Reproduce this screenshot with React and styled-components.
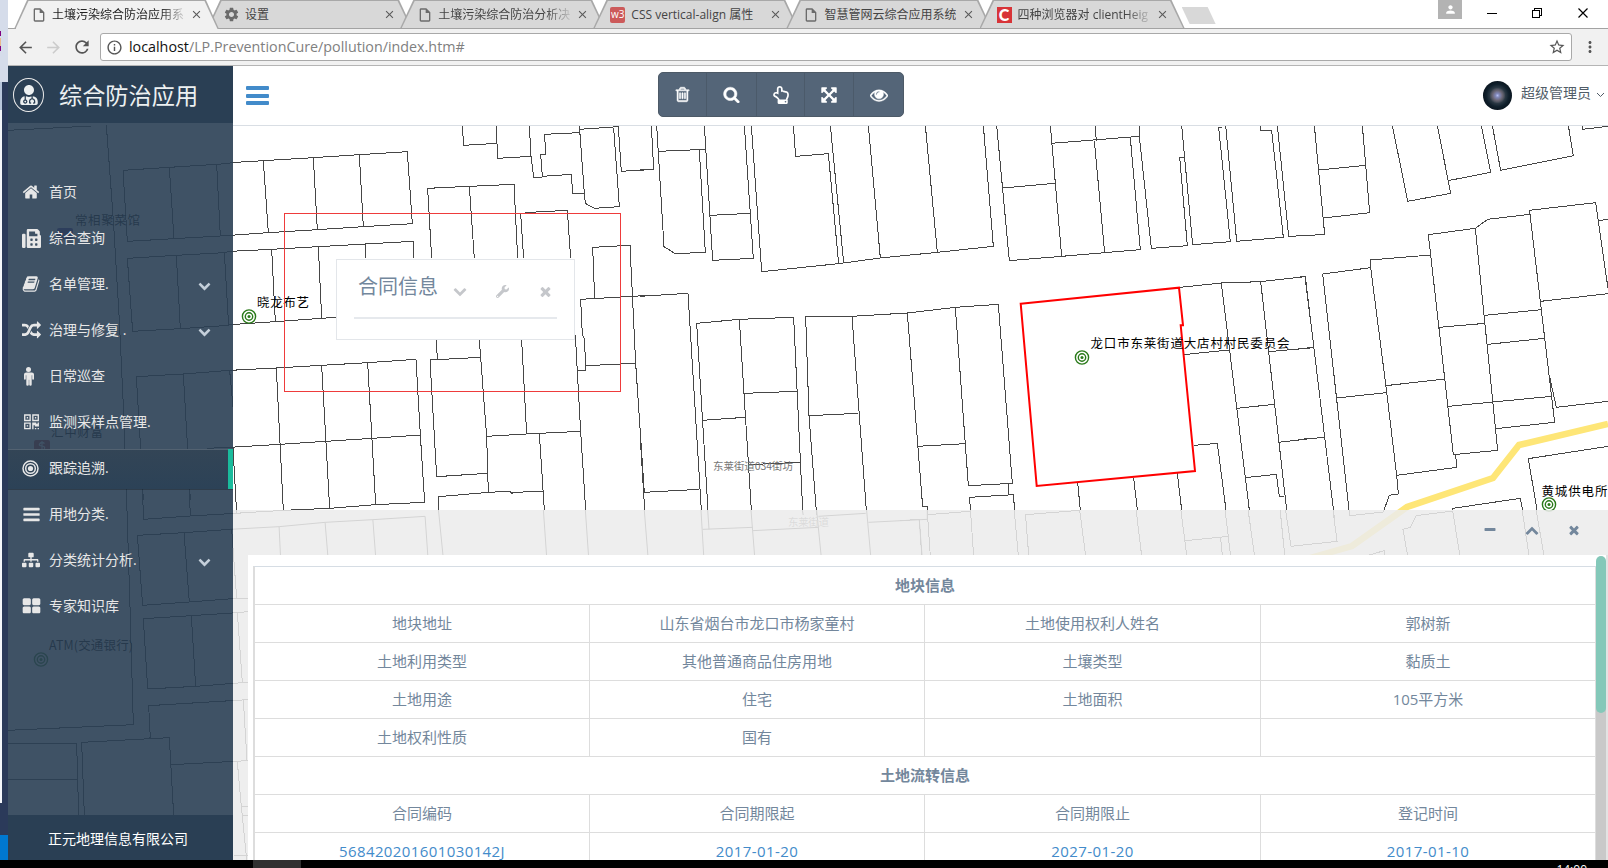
import React from "react";
import styled, { createGlobalStyle, css } from "styled-components";
import {
  MdArrowBack,
  MdArrowForward,
  MdRefresh,
  MdInfoOutline,
  MdStarBorder,
  MdMoreVert,
  MdSettings,
  MdPerson,
  MdClose,
  MdOutlineInsertDriveFile,
} from "react-icons/md";
import { FaFax, FaSitemap, FaWrench, FaUserMd, FaRegHandPointUp } from "react-icons/fa";

const Global = createGlobalStyle`
  * { box-sizing: border-box; }
  html, body { margin: 0; padding: 0; background: #000; overflow: hidden; }
  body { font-family: "Open Sans", "Noto Sans CJK SC", sans-serif; }
  svg { display: block; flex: none; }
`;

/* ---------- icons ---------- */

const PATHS = {
  home: "M1472 992v480q0 26-19 45t-45 19h-384v-384h-256v384h-384q-26 0-45-19t-19-45v-480q0-1 .5-3t.5-3l575-474 575 474q1 2 1 6zm223-69l-62 74q-8 9-21 11h-3q-13 0-21-7l-692-577-692 577q-12 8-24 7-13-2-21-11l-62-74q-8-10-7-23.5t11-21.5l719-599q32-26 76-26t76 26l244 204v-195q0-14 9-23t23-9h192q14 0 23 9t9 23v408l219 182q10 8 11 21.5t-7 23.5z",
  book: "M1703 478q40 57 18 129l-275 906q-19 64-76.5 107.5t-122.5 43.5h-923q-77 0-148.5-53.5t-99.5-131.5q-24-67-2-127 0-4 3-27t4-37q1-8-3-21.5t-3-19.5q2-11 8-21t16.5-23.5 16.5-23.5q23-38 45-91.5t30-91.5q3-10 .5-30t-.5-28q3-11 17-28t17-23q21-36 42-92t25-90q1-9-2.5-32t.5-28q4-13 22-30.5t22-22.5q19-26 42.5-84.5t27.5-96.5q1-8-3-25.5t-2-26.5q2-8 9-18t18-23 17-21q8-12 16.5-30.5t15-35 16-36 19.5-32 26.5-23.5 36-11.5 47.5 5.5l-1 3q38-9 51-9h761q74 0 114 56t18 130l-274 906q-36 119-71.5 153.5t-128.5 34.5h-869q-27 0-38 15-11 16-1 43 24 70 144 70h923q29 0 56-15.5t35-41.5l300-987q7-22 5-57 38 15 59 43zm-1064 2q-4 13 2 22.5t20 9.5h608q13 0 25.5-9.5t16.5-22.5l21-64q4-13-2-22.5t-20-9.5h-608q-13 0-25.5 9.5t-16.5 22.5zm-83 256q-4 13 2 22.5t20 9.5h608q13 0 25.5-9.5t16.5-22.5l21-64q4-13-2-22.5t-20-9.5h-608q-13 0-25.5 9.5t-16.5 22.5z",
  random: "M666 481q-60 92-137 273-22-45-37-72.5t-40.5-63.5-51-56.5-63-35-81.5-14.5h-224q-14 0-23-9t-9-23v-192q0-14 9-23t23-9h224q250 0 410 225zm1126 799q0 14-9 23l-320 320q-9 9-23 9-13 0-22.5-9.5t-9.5-22.5v-192q-32 0-85 .5t-81 1-73-1-71-5-64-10.5-63-18.5-58-28.5-59-40-55-53.5-56-69.5q59-93 136-273 22 45 37 72.5t40.5 63.5 51 56.5 63 35 81.5 14.5h256v-192q0-14 9-23t23-9q12 0 24 10l319 319q9 9 9 23zm0-896q0 14-9 23l-320 320q-9 9-23 9-13 0-22.5-9.5t-9.5-22.5v-192h-256q-48 0-87 15t-69 45-51 61.5-45 77.5q-32 62-78 171-29 66-49.5 111t-54 105-64 100-74 83-90 68.5-106.5 42-128 16.5h-224q-14 0-23-9t-9-23v-192q0-14 9-23t23-9h224q48 0 87-15t69-45 51-61.5 45-77.5q32-62 78-171 29-66 49.5-111t54-105 64-100 74-83 90-68.5 106.5-42 128-16.5h256v-192q0-14 9-23t23-9q12 0 24 10l319 319q9 9 9 23z",
  qrcode: "M576 1152v128h-128v-128h128zm0-768v128h-128v-128h128zm768 0v128h-128v-128h128zm-1024 1023h384v-383h-384v383zm0-767h384v-384h-384v384zm768 0h384v-384h-384v384zm-256 256v640h-640v-640h640zm512 512v128h-128v-128h128zm256 0v128h-128v-128h128zm0-512v384h-384v-128h-128v384h-128v-640h384v128h128v-128h128zm-768-768v640h-640v-640h640zm768 0v640h-640v-640h640z",
  bars: "M1664 1344v128q0 26-19 45t-45 19h-1408q-26 0-45-19t-19-45v-128q0-26 19-45t45-19h1408q26 0 45 19t19 45zm0-512v128q0 26-19 45t-45 19h-1408q-26 0-45-19t-19-45v-128q0-26 19-45t45-19h1408q26 0 45 19t19 45zm0-512v128q0 26-19 45t-45 19h-1408q-26 0-45-19t-19-45v-128q0-26 19-45t45-19h1408q26 0 45 19t19 45z",
  blocks: "M832 1024v384q0 52-38 90t-90 38h-512q-52 0-90-38t-38-90v-384q0-52 38-90t90-38h512q52 0 90 38t38 90zm0-768v384q0 52-38 90t-90 38h-512q-52 0-90-38t-38-90v-384q0-52 38-90t90-38h512q52 0 90 38t38 90zm896 768v384q0 52-38 90t-90 38h-512q-52 0-90-38t-38-90v-384q0-52 38-90t90-38h512q52 0 90 38t38 90zm0-768v384q0 52-38 90t-90 38h-512q-52 0-90-38t-38-90v-384q0-52 38-90t90-38h512q52 0 90 38t38 90z",
  search: "M1216 832q0-185-131.5-316.5t-316.5-131.5-316.5 131.5-131.5 316.5 131.5 316.5 316.5 131.5 316.5-131.5 131.5-316.5zm512 832q0 52-38 90t-90 38q-54 0-90-38l-343-342q-179 124-399 124-143 0-273.5-55.5t-225-150-150-225-55.5-273.5 55.5-273.5 150-225 225-150 273.5-55.5 273.5 55.5 225 150 150 225 55.5 273.5q0 220-124 399l343 343q37 37 37 90z",
  close: "M1490 1322q0 40-28 68l-136 136q-28 28-68 28t-68-28l-294-294-294 294q-28 28-68 28t-68-28l-136-136q-28-28-28-68t28-68l294-294-294-294q-28-28-28-68t28-68l136-136q28-28 68-28t68 28l294 294 294-294q28-28 68-28t68 28l136 136q28 28 28 68t-28 68l-294 294 294 294q28 28 28 68z",
  down: "M1683 808l-742 741q-19 19-45 19t-45-19l-742-741q-19-19-19-45.5t19-45.5l166-165q19-19 45-19t45 19l531 531 531-531q19-19 45-19t45 19l166 165q19 19 19 45.5t-19 45.5z",
  up: "M1683 1331l-166 165q-19 19-45 19t-45-19l-531-531-531 531q-19 19-45 19t-45-19l-166-165q-19-19-19-45.5t19-45.5l742-741q19-19 45-19t45 19l742 741q19 19 19 45.5t-19 45.5z",
  minus: "M1600 736v192q0 40-28 68t-68 28h-1216q-40 0-68-28t-28-68v-192q0-40 28-68t68-28h1216q40 0 68 28t28 68z",
  eye: "M1664 960q-152-236-381-353 61 104 61 225 0 185-131.5 316.5t-316.5 131.5-316.5-131.5-131.5-316.5q0-121 61-225-229 117-381 353 133 205 333.5 326.5t434.5 121.5 434.5-121.5 333.5-326.5zm-720-384q0-20-14-34t-34-14q-125 0-214.5 89.5t-89.5 214.5q0 20 14 34t34 14 34-14 14-34q0-86 61-147t147-61q20 0 34-14t14-34zm848 384q0 34-20 69-140 230-376.5 368.5t-499.5 138.5-499.5-139-376.5-368q-20-35-20-69t20-69q140-229 376.5-368t499.5-139 499.5 139 376.5 368q20 35 20 69z",
  trash: "M704 736v576q0 14-9 23t-23 9h-64q-14 0-23-9t-9-23v-576q0-14 9-23t23-9h64q14 0 23 9t9 23zm256 0v576q0 14-9 23t-23 9h-64q-14 0-23-9t-9-23v-576q0-14 9-23t23-9h64q14 0 23 9t9 23zm256 0v576q0 14-9 23t-23 9h-64q-14 0-23-9t-9-23v-576q0-14 9-23t23-9h64q14 0 23 9t9 23zm128 724v-948h-896v948q0 22 7 40.5t14.5 27 10.5 8.5h832q3 0 10.5-8.5t14.5-27 7-40.5zm-672-1076h448l-48-117q-7-9-17-11h-317q-10 2-17 11zm928 32v64q0 14-9 23t-23 9h-96v948q0 83-47 143.5t-113 60.5h-832q-66 0-113-58.5t-47-141.5v-952h-96q-14 0-23-9t-9-23v-64q0-14 9-23t23-9h309l70-167q15-37 54-63t79-26h320q40 0 79 26t54 63l70 167h309q14 0 23 9t9 23z",
  arrows: "M1411 541l-355 355 355 355 144-144q29-31 70-14 39 17 39 59v448q0 26-19 45t-45 19h-448q-42 0-59-40-17-39 14-69l144-144-355-355-355 355 144 144q31 30 14 69-17 40-59 40h-448q-26 0-45-19t-19-45v-448q0-42 40-59 39-17 69 14l144 144 355-355-355-355-144 144q-19 19-45 19-12 0-24-5-40-17-40-59v-448q0-26 19-45t45-19h448q42 0 59 40 17 39-14 69l-144 144 355 355 355-355-144-144q-31-30-14-69 17-40 59-40h448q26 0 45 19t19 45v448q0 42-39 59-13 5-25 5-26 0-45-19z",
};

const Glyph = ({ name, size = 18, bold = 0 }) => (
  <svg
    width={size}
    height={size}
    viewBox="0 0 1792 1792"
    fill="currentColor"
    stroke={bold ? "currentColor" : "none"}
    strokeWidth={bold}
  >
    <path d={PATHS[name]} />
  </svg>
);

const Bullseye = () => (
  <svg width="17" height="17" viewBox="0 0 17 17" fill="none" stroke="currentColor" strokeWidth="1.5">
    <circle cx="8.5" cy="8.5" r="7.5" />
    <circle cx="8.5" cy="8.5" r="4.8" />
    <circle cx="8.5" cy="8.5" r="2.6" fill="currentColor" stroke="none" />
  </svg>
);

const Person = () => (
  <svg width="13" height="19" viewBox="0 0 13 19" fill="currentColor">
    <circle cx="6.5" cy="2.6" r="2.5" />
    <path d="M3.2 5.4h6.6q2.2 0 2.2 2.2v4.2q0 1-.9 1t-.9-1V8.3h-.5v9.3q0 1.2-1.2 1.2t-1.3-1.2v-4.9h-.4v4.9q0 1.2-1.3 1.2t-1.2-1.2V8.3h-.5v3.5q0 1-.9 1t-.9-1V7.6q0-2.2 2.2-2.2z" />
  </svg>
);

/* ---------- desktop and browser frame ---------- */

const Desktop = styled.div`
  width: 1608px;
  height: 868px;
  display: flex;
  flex-direction: column;
  overflow: hidden;
`;

const DesktopRow = styled.div`
  flex: 0 0 860px;
  display: flex;
`;

const EdgeStrip = styled.div`
  width: 8px;
  display: flex;
  flex-direction: column;
`;

const EdgePiece = styled.div`
  height: ${(p) => p.$h}px;
  background: ${(p) => p.$bg};
`;

const Browser = styled.div`
  flex: 1;
  min-width: 0;
  display: flex;
  flex-direction: column;
  background: #fff;
`;

const TabStrip = styled.div`
  height: 29px;
  display: flex;
  background: linear-gradient(#fff 28px, #a3a3a3 28px);
  padding-left: 6px;
`;

const Tab = styled.div`
  position: relative;
  z-index: ${(p) => (p.$active ? 2 : 0)};
  width: 205px;
  height: ${(p) => (p.$active ? 29 : 28)}px;
  margin-right: -11.9px;
  padding: ${(p) => (p.$active ? 0 : 1)}px 17px 0 17px;
  display: flex;
  align-items: center;
  gap: 6px;
  font-size: 12px;
  color: ${(p) => (p.$active ? "#222" : "#444")};
  isolation: isolate;
  &::before,
  &::after {
    content: "";
    position: absolute;
    inset: 0;
    z-index: -1;
    background: #a8a8a8;
    clip-path: polygon(0 100%, 13px 0, calc(100% - 13px) 0, 100% 100%);
  }
  &::after {
    inset: 1px 1.5px 0;
    background: ${(p) => (p.$active ? "#f1f1f1" : "#d8d8d8")};
  }
`;

const TabIcon = styled.span`
  width: 15px;
  display: flex;
  justify-content: center;
  color: #6b6b6b;
`;

const TabTitle = styled.span`
  flex: 1;
  overflow: hidden;
  white-space: nowrap;
  line-height: 28px;
  ${(p) => p.$fade && css`mask-image: linear-gradient(90deg, #000 108px, transparent 136px);`}
`;

const TabClose = styled.span`
  width: 12px;
  color: #5a5a5a;
`;

const W3Badge = styled.span`
  width: 16px;
  height: 16px;
  border-radius: 2px;
  background: #cc5a5a;
  color: #fff;
  font: 10px/15px "Open Sans", sans-serif;
  text-align: center;
`;

const CBadge = styled(W3Badge)`
  background: #d83438;
  border-radius: 0;
  font: 900 16px/16px "Lato", sans-serif;
`;

const NewTab = styled.div`
  width: 34px;
  height: 17px;
  margin: 7px 0 0 9px;
  background: #d8d8d8;
  clip-path: polygon(0 0, 26px 0, 34px 100%, 8px 100%);
`;

const WindowControls = styled.div`
  margin-left: auto;
  display: flex;
  align-items: flex-start;
`;

const UserBox = styled.div`
  width: 24px;
  height: 19px;
  margin-right: 25px;
  display: flex;
  justify-content: center;
  align-items: center;
  background: #b3b3b3;
  color: #fff;
`;

const AddressBar = styled.div`
  height: 37px;
  display: flex;
  align-items: center;
  padding: 0 9px 0 8px;
  background: #f1f1f1;
  border-bottom: 1px solid #b5b5b5;
`;

const NavButton = styled.span`
  width: 28px;
  display: flex;
  color: ${(p) => (p.$off ? "#ccc" : "#555")};
`;

const Omnibox = styled.div`
  flex: 1;
  height: 28px;
  margin-right: 9px;
  border: 1px solid #a9a9a9;
  border-radius: 3px;
  background: #fff;
  display: flex;
  align-items: center;
  padding: 0 5px;
  color: #555;
`;

const Url = styled.span`
  flex: 1;
  margin-left: 6px;
  font-size: 14.3px;
  line-height: 24px;
  color: #808080;
  b {
    font-weight: 400;
    color: #111;
  }
`;

const Taskbar = styled.div`
  height: 8px;
  background: #000;
  display: flex;
  justify-content: space-between;
  overflow: hidden;
  padding: 0 21px 0 253px;
`;

const TaskItem = styled.div`
  width: 48px;
  background: #303030;
`;

const Clock = styled.div`
  color: #fff;
  font-size: 12px;
  line-height: 16px;
  padding-top: 2px;
`;

/* ---------- application ---------- */

const Stage = styled.div`
  position: relative;
  flex: 1;
  min-height: 0;
  display: flex;
  overflow: hidden;
`;

const MapLayer = styled.svg`
  position: absolute;
  left: 0;
  top: 0;
`;

const Sidebar = styled.aside`
  position: relative;
  width: 225px;
  display: flex;
  flex-direction: column;
  background: rgba(42, 63, 84, 0.9);
  color: #e7e7e7;
`;

const Brand = styled.div`
  height: 57px;
  display: flex;
  align-items: center;
  padding-left: 5px;
  gap: 15px;
  background: #2a3f54;
  color: #ecf0f1;
  font-size: 23.2px;
  line-height: 40px;
`;

const BrandMark = styled.span`
  width: 31px;
  height: 34px;
  border: 1px solid #eaeaea;
  border-radius: 50%;
  display: flex;
  align-items: center;
  justify-content: center;
`;

const Menu = styled.nav`
  flex: 1;
  padding-top: 50px;
  display: flex;
  flex-direction: column;
  gap: 6px;
`;

const MenuItem = styled.div`
  height: 40px;
  padding: 0 ${(p) => (p.$active ? 16 : 22)}px 2px 14px;
  display: flex;
  align-items: center;
  font-size: 14px;
  line-height: 20px;
  ${(p) =>
    p.$active &&
    css`
      background: linear-gradient(#334556, #2c4257);
      box-shadow: inset 0 1px 0 rgba(255, 255, 255, 0.16), 0 1px 0 rgba(0, 0, 0, 0.25);
      border-right: 5px solid #1abb9c;
    `}
`;

const MenuIcon = styled.span`
  width: 27px;
  display: flex;
`;

const MenuLabel = styled.span`
  flex: 1;
`;

const MenuArrow = styled.span`
  color: #c4cfda;
  padding-top: 3px;
`;

const Company = styled.div`
  height: 45px;
  background: #2a3f54;
  color: #fff;
  font-size: 14px;
  line-height: 47px;
  padding-left: 40px;
`;

const Main = styled.main`
  position: relative;
  flex: 1;
  min-width: 0;
  display: flex;
  flex-direction: column;
  justify-content: space-between;
`;

const TopBar = styled.header`
  height: 60px;
  background: #fff;
  border-bottom: 1px solid #d9dee4;
  display: flex;
  align-items: flex-start;
`;

const MenuToggle = styled.div`
  width: 23px;
  margin: 20px 0 0 12.5px;
  display: flex;
  flex-direction: column;
  gap: 3.5px;
  i {
    height: 4px;
    border-radius: 1px;
    background: #428bca;
  }
`;

const ToolGroup = styled.div`
  margin: 6px auto 0 389.5px;
  height: 45px;
  display: flex;
  border: 1px solid #4d5a67;
  border-radius: 5px;
  background: #546578;
  color: #fff;
`;

const ToolButton = styled.span`
  width: ${(p) => p.$w}px;
  display: flex;
  align-items: center;
  justify-content: center;
  & + & {
    border-left: 1px solid #4b5a6a;
  }
`;

const Account = styled.div`
  display: flex;
  align-items: center;
  padding-right: 3px;
  height: 58px;
  font-size: 14px;
  color: #515d68;
`;

const Avatar = styled.div`
  width: 29px;
  height: 29px;
  margin-right: 9px;
  border-radius: 50%;
  background: radial-gradient(circle at 50% 50%, #b4bdf0 0, #8087b8 2px, rgba(120, 110, 125, 0.7) 5px, rgba(90, 80, 80, 0) 8px),
    radial-gradient(circle, #4a5560 20%, #10202c 55%, #050c14 85%);
`;

const AccountName = styled.span`
  margin-right: 5px;
  line-height: 20px;
  padding-bottom: 4px;
`;

const ContractWindow = styled.section`
  position: absolute;
  left: 103px;
  top: 193px;
  width: 239px;
  height: 81px;
  padding: 15px 17px;
  border: 1px solid #e3e6ea;
  background: #fff;
`;

const ContractHeader = styled.div`
  display: flex;
  align-items: center;
  height: 44px;
  padding: 0 3px 18px 4px;
  border-bottom: 2px solid #e6e9ed;
  color: #c5c7cb;
`;

const ContractTitle = styled.h2`
  margin: 0 14px 0 0;
  font-size: 20px;
  font-weight: 400;
  line-height: 26px;
  color: #73879c;
`;

const ContractTool = styled.span`
  width: 15px;
  margin-right: ${(p) => p.$gap || 0}px;
  padding-top: 8px;
  display: flex;
  justify-content: center;
`;

const DetailPanel = styled.section`
  height: 350px;
  display: flex;
  flex-direction: column;
  background: rgba(235, 235, 235, 0.86);
`;

const PanelTools = styled.div`
  height: 45px;
  display: flex;
  justify-content: flex-end;
  gap: 28px;
  padding: 13px 27px 0 0;
  color: #73879c;
`;

const PanelBody = styled.div`
  flex: 1;
  min-height: 0;
  margin-left: 15px;
  display: flex;
  overflow: hidden;
  background: #fff;
`;

const TableArea = styled.div`
  flex: 1;
  padding: 11px 0 0 5px;
`;

const Grid = styled.div`
  display: grid;
  grid-template-columns: 335px 335px 336px 1fr;
  grid-auto-rows: 38px;
  border-top: 1px solid #d6dde4;
  border-left: 2px solid #ddd;
`;

const Cell = styled.div`
  border-right: 1px solid #ddd;
  border-bottom: 1px solid #ddd;
  font-size: 15px;
  line-height: 36px;
  text-align: center;
  color: ${(p) => (p.$link ? "#428bca" : "#73879c")};
  letter-spacing: ${(p) => (p.$link ? "0.4px" : "0")};
  ${(p) =>
    p.$head &&
    css`
      grid-column: 1 / -1;
      font-weight: 700;
    `}
`;

const ScrollTrack = styled.div`
  width: 12px;
  padding: 1px 2px 0 0;
  background: linear-gradient(#fff 14px, #c9c9c9 14px);
  border-right: 2px solid #e3e3e3;
`;

const ScrollThumb = styled.div`
  width: 10px;
  height: 157px;
  border-radius: 5px;
  background: #84c8b9;
`;

/* ---------- map ---------- */

const PARCELS = [
  {
    t: "translate(230 120) scale(.33333)",
    d: "M0 128L100 122L250 113L388 104L532 95L547 311L400 320L262 329L115 338L0 346M100 122L115 338M250 113L262 329M388 104L400 320M697 16L701 76L801 70L798 16M801 70L803 115L903 109L898 16M903 109L911 172H937M1048 38L944 43L947 105H932L937 169L1024 163L1028 220H1063L1048 16M1063 220L1066 250L1093 265L1168 260L1151 24M1048 28L1165 20L1174 154L1260 148M605 415L593 205L718 199L852 193L863 415M718 199L733 415M881 415L872 281L900 277L1012 271L1022 415M0 394L125 388L265 380L407 372L550 364V415M125 388L136 605M265 380L275 595M407 372V415M0 614L136 605L275 595L318 592M1094 535L1088 382L1200 376L1217 730M1052 538L1208 529L1260 526M1052 538L1057 645L1063 655L1067 737V751H1043M1067 737L1217 730L1243 1118H1260M1036 645L1052 935L1067 1170M619 660L622 718M748 660L770 950L775 1117M600 720L751 712M600 720L620 1070L770 1060M875 660L890 942M768 949L890 942L928 940L1052 934M928 940L943 1170M626 1170V1130L775 1117L840 1114L846 1120L850 1117L940 1114M0 751L139 744L275 736L413 728L558 718L571 945L584 1147L437 1154L299 1165L160 1171L0 1181M139 744L160 1171M275 736L299 1165M413 728L437 1154M0 982L150 973L287 964L427 955L571 945M9 984L20 1180",
  },
  {
    t: "translate(640 120) scale(.33333)",
    d: "M34 16L41 148L0 151M50 16L72 380L106 401L196 397L178 90M55 94L196 88M193 16L218 421L340 415L313 16M210 286L331 280M334 16L365 455L595 431L721 414L892 397L1060 379L1030 16M460 16L467 109L565 101L596 431M571 16L611 428M685 16L721 414M856 16L892 397M1070 16L1108 422M0 529L144 520L184 1170M0 940L14 1170M11 1117L178 1108M204 1170L170 610L298 598L461 592L488 1170M298 598L334 1170M312 820L471 814M188 901L315 892M325 1034L481 1027M530 1186L507 887L497 589H636L802 579L946 562L1075 553L1117 1090H1105V1125M507 887L655 880M636 589L679 1170M802 579L848 1160H862V1170M946 562L985 1097L1117 1090M833 979L975 971M991 1170L989 1132L1120 1124L1124 1170",
  },
  {
    t: "translate(1000 120) scale(.33333)",
    d: "M151 16L185 409M154 70L418 49V16M285 16L289 62M283 62L314 398M8 204L164 190M28 422L185 409L314 398L421 389L391 54M418 49L454 385L562 377L539 112H553M545 16L578 374L691 365L656 22H665M677 16L710 364L850 352L815 31H782V16M832 16L866 349L930 346M540 502L664 489L782 485L915 470L930 590M664 489L748 1170M782 485L860 1170M550 704L686 690M806 695L930 684M710 865L823 853M836 967L930 956M735 1073L829 1063L838 1130H853M583 976L652 970L678 1170M233 1088L241 1170M401 1073L412 1170M532 1060L545 1170",
  },
  {
    t: "translate(1300 120) scale(.33333)",
    d: "M43 16L74 343L0 348M57 150L197 136M187 16L209 278L72 294M277 16L323 244L452 220L412 16M444 182L572 157L544 16M577 16L602 151L820 107L805 16M848 16V28L924 19M0 471L16 470L104 1200M0 686L40 682M0 958L75 952M212 443L68 462L149 1187L250 1176L268 1126L295 1122L290 1066L470 1042L467 1003M392 405L211 420L212 443L258 800L290 1066M110 834L258 818M257 797L436 777M385 344L526 325L563 298L690 283L688 271L887 248L924 505M385 344L392 405L460 1004L593 991L526 325M417 622L556 610M445 859L755 829M555 586L724 569M564 673L734 655M690 283L764 907L587 926M722 544L924 521M896 302L924 298M750 775L769 862L924 844M711 1170L685 1016L924 979M459 1170V1165L661 1135L668 1170",
  },
  {
    t: "translate(230 500) scale(.44643 .33333)",
    d: "M0 88L110 80L213 67L320 59L437 49L443 165M110 80L113 165M213 67L219 165M320 59L326 165M467 30L477 165M702 30L709 165M796 30L803 165M928 30L936 165M1055 30L1061 165M1059 88L1171 82M1070 30L1073 88M1167 30L1175 165M1171 92L1318 82M1282 30L1284 45M1314 30L1324 165M1318 49L1424 40M1426 30L1435 165M1430 67L1562 58M1562 30V58M1544 60L1550 165",
  },
  {
    t: "translate(900 500) scale(.4515 .33333)",
    d: "M61 30V44L155 34M156 30L163 165M61 44L67 165M0 62L43 58L48 165M253 30L262 165M285 165L278 44L398 31L411 165M398 29V31M523 30L535 165M622 30L635 165M632 122L728 109M720 30L732 165M710 112L714 165M771 30L785 165M842 30L852 165M854 30L866 139L968 124L959 30M1124 165L1114 88L1130 82L1143 47L1224 33L1240 165M1378 30L1393 165M1409 30L1426 165M1040 165L1072 152V165",
  },
  {
    t: "translate(0 120) scale(.33333)",
    d: "M24 31L275 18M319 16L340 300L358 600L372 900L379 1140M690 130L650 133L508 142L369 151L382 364L522 356L661 348L690 346M508 142L522 356M650 133L661 348M690 394L673 398L529 406L382 415L398 634L541 626L686 616L690 614M529 406L541 626M673 398L686 616M690 751L550 762L409 770L422 988L430 1140M550 762L563 988L571 1140M689 752L699 860M620 985L690 982",
  },
  {
    t: "translate(0 490) scale(.33333)",
    d: "M379 0L390 350L400 704L24 721M427 0L431 88L571 78L690 71M568 0L571 78M412 136L552 128L690 118M412 136L428 346L568 336L710 325H743M552 128L568 336M695 118L710 325M743 365L712 368L574 377L430 386L443 597L587 589L727 578H743M574 377L587 589M712 368L727 578M451 744L446 647L743 629M730 629L741 812M446 744H451M245 757L508 743L521 975M245 757L253 975M24 760H230L236 975M24 868H230M513 824L743 812M712 815L724 950L740 1110M722 950H743M727 978H743M703 1097H743",
  },
];

const MARKERS = [
  [249, 316.5],
  [1082, 357.5],
  [1549, 504.5],
  [41, 659.5],
];

const LABELS = [
  ["晓龙布艺", 257, 306.5, 52],
  ["龙口市东莱街道大店村村民委员会", 1090.5, 347.5, 199],
  ["黄城供电所", 1541.5, 495.5, 66],
  ["常相聚菜馆", 75, 224.5, 65],
  ["汇中财富", 51, 437, 52],
  ["ATM(交通银行)", 49, 649.5, 84],
];

const VillageMap = () => (
  <MapLayer width="1600" height="794" viewBox="8 66 1600 794">
    <rect x="8" y="66" width="1600" height="794" fill="#fff" />
    <path d="M1310 558L1352 546L1407 507L1493 478L1519 445L1608 424" fill="none" stroke="#fee677" strokeWidth="6.5" />
    {PARCELS.map((p) => (
      <path
        key={p.t}
        transform={p.t}
        d={p.d}
        fill="none"
        stroke="#464646"
        strokeWidth="1"
        vectorEffect="non-scaling-stroke"
        shapeRendering="crispEdges"
      />
    ))}
    <g fontFamily="'Noto Sans CJK SC', sans-serif" fontSize="10.5" fill="#777">
      <text x="713" y="469.5" textLength="80">东莱街道034街坊</text>
      <text x="788" y="525.5" textLength="41">东莱街道</text>
    </g>
    <rect x="57" y="228" width="16" height="11" rx="2" fill="#4a37a0" />
    <rect x="34" y="440" width="16" height="11" rx="2" fill="#b33a3a" />
    <path d="M44.5 443.5q-2.500-2-4.500 0t2 2.500 2 3.500M42 441v8" fill="none" stroke="#fff" strokeWidth="1.2" />
    <path d="M1020.7 303.7L1179 287.7L1183 325.3H1180.7L1195 471L1036.7 486Z" fill="none" stroke="#f00" strokeWidth="2" />
    {MARKERS.map(([x, y]) => (
      <g key={x} fill="none" stroke="#2a7a1a" strokeWidth="1.4">
        <circle cx={x} cy={y} r="6.6" fill="#fff" />
        <circle cx={x} cy={y} r="3.7" />
        <circle cx={x} cy={y} r="1.5" fill="#2a7a1a" stroke="none" />
      </g>
    ))}
    <g fontFamily="'Noto Sans CJK SC', sans-serif" fontSize="12.5" fill="#000">
      {LABELS.map(([s, x, y, w]) => (
        <text key={s} x={x} y={y} textLength={w}>
          {s}
        </text>
      ))}
    </g>
    <rect x="284.5" y="213.5" width="336" height="178" fill="none" stroke="#ee3b3b" />
  </MapLayer>
);

/* ---------- data ---------- */

const FileIcon = <MdOutlineInsertDriveFile size={16} />;

const TABS = [
  { title: "土壤污染综合防治应用系", icon: FileIcon, active: true, fade: true },
  { title: "设置", icon: <MdSettings size={17} /> },
  { title: "土壤污染综合防治分析决", icon: FileIcon, fade: true },
  { title: "CSS vertical-align 属性", icon: <W3Badge>w3</W3Badge> },
  { title: "智慧管网云综合应用系统", icon: FileIcon },
  { title: "四种浏览器对 clientHeig", icon: <CBadge>C</CBadge>, fade: true },
];

const MENU = [
  { label: "首页", icon: <Glyph name="home" /> },
  { label: "综合查询", icon: <FaFax size={19} /> },
  { label: "名单管理.", icon: <Glyph name="book" /> , more: true },
  { label: "治理与修复 .", icon: <Glyph name="random" size={19} />, more: true },
  { label: "日常巡查", icon: <Person /> },
  { label: "监测采样点管理.", icon: <Glyph name="qrcode" size={19} /> },
  { label: "跟踪追溯.", icon: <Bullseye />, active: true },
  { label: "用地分类.", icon: <Glyph name="bars" size={19} /> },
  { label: "分类统计分析.", icon: <FaSitemap size={18} />, more: true },
  { label: "专家知识库", icon: <Glyph name="blocks" size={19} /> },
];

const SECTIONS = [
  {
    title: "地块信息",
    rows: [
      ["地块地址", "山东省烟台市龙口市杨家童村", "土地使用权利人姓名", "郭树新"],
      ["土地利用类型", "其他普通商品住房用地", "土壤类型", "黏质土"],
      ["土地用途", "住宅", "土地面积", "105平方米"],
      ["土地权利性质", "国有", "", ""],
    ],
  },
  {
    title: "土地流转信息",
    rows: [
      ["合同编码", "合同期限起", "合同期限止", "登记时间"],
      ["568420201601030142J", "2017-01-20", "2027-01-20", "2017-01-10"],
    ],
  },
];

export default function App() {
  return (
    <Desktop>
      <Global />
      <DesktopRow>
        <EdgeStrip>
          <EdgePiece $h={82} $bg="linear-gradient(90deg, transparent 1px, #d5dcea 1px), linear-gradient(#d5dcea 31px, #800080 31px 36px, #d5dcea 36px 38px, #e9b98e 38px 46px, #800080 46px 51px, #d5dcea 51px)" />
          <EdgePiece $h={28} $bg="linear-gradient(90deg, #b9c6dc 2px, #2b3a5a 2px)" />
          <EdgePiece $h={693} $bg="linear-gradient(90deg, #f4f6fb 2px, #2b3a5a 2px)" />
          <EdgePiece $h={32} $bg="#2b3a5a" />
          <EdgePiece $h={25} $bg="#0078d0" />
        </EdgeStrip>
        <Browser>
          <TabStrip>
            {TABS.map((t) => (
              <Tab key={t.title} $active={t.active}>
                <TabIcon>{t.icon}</TabIcon>
                <TabTitle $fade={t.fade}>{t.title}</TabTitle>
                <TabClose>
                  <MdClose size={13} />
                </TabClose>
              </Tab>
            ))}
            <NewTab />
            <WindowControls>
              <UserBox>
                <MdPerson size={13} />
              </UserBox>
              <svg width="121" height="28" viewBox="0 0 121 28" fill="none" stroke="#000" shapeRendering="crispEdges">
                <path d="M0 13.5h10" />
                <path d="M45.5 10.5h7v7h-7zM47.5 10V8.5h7v7H53" />
                <path d="M91.5 8.5l9 9M100.5 8.5l-9 9" shapeRendering="auto" strokeWidth="1.2" />
              </svg>
            </WindowControls>
          </TabStrip>
          <AddressBar>
            <NavButton>
              <MdArrowBack size={19} />
            </NavButton>
            <NavButton $off>
              <MdArrowForward size={19} />
            </NavButton>
            <NavButton>
              <MdRefresh size={20} />
            </NavButton>
            <Omnibox>
              <MdInfoOutline size={17} />
              <Url>
                <b>localhost</b>/LP.PreventionCure/pollution/index.htm#
              </Url>
              <MdStarBorder size={18} />
            </Omnibox>
            <MdMoreVert size={18} color="#555" />
          </AddressBar>
          <Stage>
            <VillageMap />
            <Sidebar>
              <Brand>
                <BrandMark>
                  <FaUserMd size={20} />
                </BrandMark>
                综合防治应用
              </Brand>
              <Menu>
                {MENU.map((m) => (
                  <MenuItem key={m.label} $active={m.active}>
                    <MenuIcon>{m.icon}</MenuIcon>
                    <MenuLabel>{m.label}</MenuLabel>
                    {m.more && (
                      <MenuArrow>
                        <Glyph name="down" size={13} />
                      </MenuArrow>
                    )}
                  </MenuItem>
                ))}
              </Menu>
              <Company>正元地理信息有限公司</Company>
            </Sidebar>
            <Main>
              <TopBar>
                <MenuToggle>
                  <i />
                  <i />
                  <i />
                </MenuToggle>
                <ToolGroup>
                  <ToolButton $w={47}>
                    <Glyph name="trash" size={17} bold={50} />
                  </ToolButton>
                  <ToolButton $w={50}>
                    <Glyph name="search" size={17} bold={50} />
                  </ToolButton>
                  <ToolButton $w={48}>
                    <FaRegHandPointUp size={18} />
                  </ToolButton>
                  <ToolButton $w={49}>
                    <Glyph name="arrows" size={18} />
                  </ToolButton>
                  <ToolButton $w={50}>
                    <Glyph name="eye" size={18} bold={40} />
                  </ToolButton>
                </ToolGroup>
                <Account>
                  <Avatar />
                  <AccountName>超级管理员</AccountName>
                  <svg width="9" height="6" viewBox="0 0 9 6" fill="none" stroke="currentColor">
                    <path d="M1 1l3.5 3.5L8 1" />
                  </svg>
                </Account>
              </TopBar>
              <ContractWindow>
                <ContractHeader>
                  <ContractTitle>合同信息</ContractTitle>
                  <ContractTool $gap={28}>
                    <Glyph name="down" size={14} />
                  </ContractTool>
                  <ContractTool $gap={28}>
                    <FaWrench size={13} />
                  </ContractTool>
                  <ContractTool>
                    <Glyph name="close" size={15} />
                  </ContractTool>
                </ContractHeader>
              </ContractWindow>
              <DetailPanel>
                <PanelTools>
                  <Glyph name="minus" size={14} />
                  <Glyph name="up" size={14} />
                  <Glyph name="close" size={14} />
                </PanelTools>
                <PanelBody>
                  <TableArea>
                    <Grid>
                      {SECTIONS.map((s) => (
                        <React.Fragment key={s.title}>
                          <Cell $head>{s.title}</Cell>
                          {s.rows.flatMap((row, r) =>
                            row.map((text, c) => (
                              <Cell key={`${r}-${c}`} $link={/^\d{4}.*\d{2}J?$/.test(text)}>
                                {text}
                              </Cell>
                            ))
                          )}
                        </React.Fragment>
                      ))}
                    </Grid>
                  </TableArea>
                  <ScrollTrack>
                    <ScrollThumb />
                  </ScrollTrack>
                </PanelBody>
              </DetailPanel>
            </Main>
          </Stage>
        </Browser>
      </DesktopRow>
      <Taskbar>
        <TaskItem />
        <Clock>14:00</Clock>
      </Taskbar>
    </Desktop>
  );
}
